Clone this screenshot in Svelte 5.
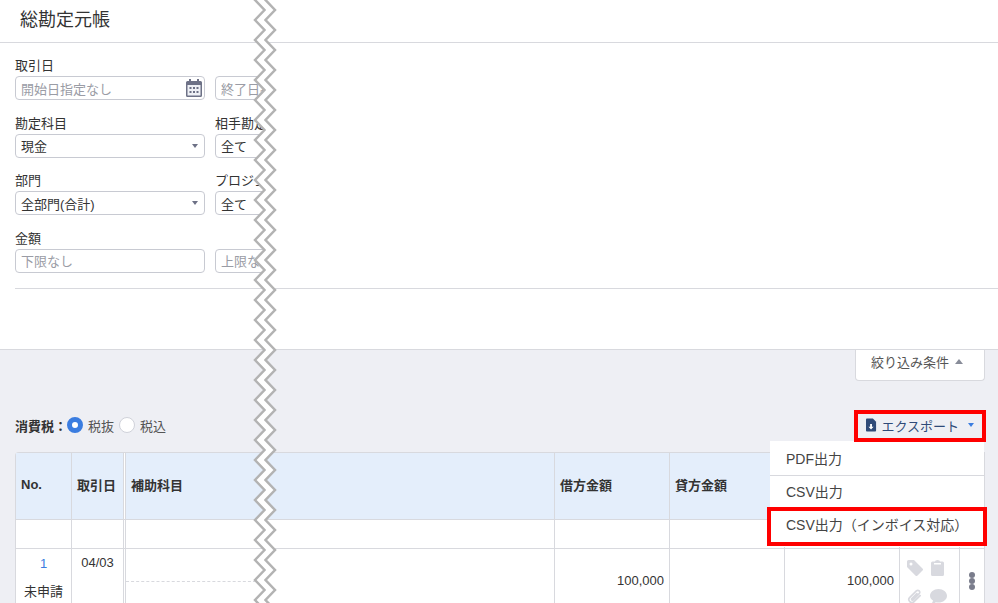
<script>
  // zigzag divider, one tooth every 20px
  let zigzag = (x0, x1) => {
    let pts = [];
    for (let i = -1; i < 32; i++) {
      pts.push(`${x0},${i * 20}`);
      pts.push(`${x1},${i * 20 + 10}`);
    }
    return pts;
  };
  let left = zigzag(255, 264.5);
  let right = zigzag(265.5, 275);
  let band = [...left, ...[...right].reverse()].join(' ');
</script>

<div class="page">
  <header class="title"><h1>総勘定元帳</h1></header>

  <section class="filters">
    <div class="row">
      <div class="field">
        <span class="lbl">取引日</span>
        <div class="box">
          <span class="ph">開始日指定なし</span>
          <svg class="cal" viewBox="0 0 16 18" width="16" height="18">
            <path fill="#6d7186" d="M3 0h2v2h6V0h2v2h1.500A1.500 1.500 0 0 1 16 3.500v13a1.500 1.500 0 0 1-1.500 1.500h-13A1.500 1.500 0 0 1 0 16.500v-13A1.500 1.500 0 0 1 1.500 2H3z"/>
            <rect x="1.500" y="6" width="13" height="10.500" fill="#eef0f5"/>
            <path fill="#6d7186" d="M3.500 8h2v2h-2zM7 8h2v2H7zM10.500 8h2v2h-2zM3.500 12h2v2h-2zM7 12h2v2H7zM10.500 12h2v2h-2z"/>
          </svg>
        </div>
      </div>
      <div class="field">
        <span class="lbl">&nbsp;</span>
        <div class="box"><span class="ph">終了日指定なし</span></div>
      </div>
    </div>
    <div class="row">
      <div class="field">
        <span class="lbl">勘定科目</span>
        <div class="box"><span>現金</span><i class="caret"></i></div>
      </div>
      <div class="field">
        <span class="lbl">相手勘定科目</span>
        <div class="box"><span>全て</span><i class="caret"></i></div>
      </div>
    </div>
    <div class="row">
      <div class="field">
        <span class="lbl">部門</span>
        <div class="box"><span>全部門(合計)</span><i class="caret"></i></div>
      </div>
      <div class="field">
        <span class="lbl">プロジェクト</span>
        <div class="box"><span>全て</span><i class="caret"></i></div>
      </div>
    </div>
    <div class="row">
      <div class="field">
        <span class="lbl">金額</span>
        <div class="box"><span class="ph">下限なし</span></div>
      </div>
      <div class="field">
        <span class="lbl">&nbsp;</span>
        <div class="box"><span class="ph">上限なし</span></div>
      </div>
    </div>
    <hr />
  </section>

  <section class="results">
    <div class="tab-row">
      <div class="tab">絞り込み条件<i class="up"></i></div>
    </div>

    <div class="tools">
      <div class="tax">
        <b>消費税：</b>
        <i class="radio on"></i><span>税抜</span>
        <i class="radio"></i><span>税込</span>
      </div>
      <div class="export">
        <svg viewBox="0 0 12 14" width="11" height="14">
          <path fill="#2f4a78" d="M1 0h6.500L11 3.500V13a1 1 0 0 1-1 1H1a1 1 0 0 1-1-1V1a1 1 0 0 1 1-1z"/>
          <path fill="#fff" d="M4.500 6h2v3h1.800L5.500 12 2.700 9h1.800z"/>
        </svg>
        <span>エクスポート</span>
        <i class="caret blue"></i>
      </div>
    </div>

    <table>
      <colgroup>
        <col class="w-no" /><col class="w-date" /><col class="w-sep" /><col class="w-sub" />
        <col class="w-amt" /><col class="w-amt" /><col class="w-amt" /><col class="w-icons" /><col class="w-more" />
      </colgroup>
      <thead>
        <tr>
          <th>No.</th><th>取引日</th><th class="sep"></th><th>補助科目</th>
          <th>借方金額</th><th>貸方金額</th><th></th><th></th><th></th>
        </tr>
      </thead>
      <tbody>
        <tr class="blank"><td></td><td></td><td class="sep"></td><td></td><td></td><td></td><td></td><td></td><td></td></tr>
        <tr class="entry">
          <td class="no"><span class="link">1</span><span class="st">未申請</span></td>
          <td class="date">04/03</td>
          <td class="sep"></td>
          <td class="sub"><div class="dash"></div></td>
          <td class="num">100,000</td>
          <td></td>
          <td class="num">100,000</td>
          <td class="icons">
            <div class="icon-grid">
              <svg viewBox="0 0 16 16" width="16" height="16"><path fill="#d8d9df" d="M0 1.500A1.500 1.500 0 0 1 1.500 0H7l8.500 8.500a1.500 1.500 0 0 1 0 2.100l-5 5a1.500 1.500 0 0 1-2.100 0L0 7zM4 2.500A1.500 1.500 0 1 0 4 5.500 1.500 1.500 0 0 0 4 2.500z"/></svg>
              <svg viewBox="0 0 13 16" width="13" height="16"><path fill="#d8d9df" d="M4 1.500a2.500 1.500 0 0 1 5 0h2.500A1.500 1.500 0 0 1 13 3v11.500a1.500 1.500 0 0 1-1.500 1.500h-10A1.500 1.500 0 0 1 0 14.500V3a1.500 1.500 0 0 1 1.500-1.500zM3 3v1.500h7V3z"/></svg>
              <svg viewBox="0 0 16 16" width="15" height="15"><path fill="none" stroke="#d8d9df" stroke-width="1.800" stroke-linecap="round" d="M14 7l-6.500 6.500a3 3 0 0 1-4.500-4.500L10 2a2 2 0 0 1 3 3L6.500 11.500a.8.800 0 0 1-1.300-1.300L10.500 5"/></svg>
              <svg class="bubble" viewBox="0 0 17 16" width="17" height="16"><path fill="#d8d9df" d="M8.500 0C13.200 0 17 3 17 6.800s-3.800 6.800-8.500 6.800c-1 0-2-.1-2.900-.4C5 14.200 3.300 15.200 1 15.200c1-1 1.800-2.200 2-3.600C1.200 10.400 0 8.700 0 6.800 0 3 3.800 0 8.500 0z"/></svg>
            </div>
          </td>
          <td class="more"><i></i><i></i><i></i></td>
        </tr>
      </tbody>
    </table>
  </section>

  <ul class="menu">
    <li class="first">PDF出力</li>
    <li>CSV出力</li>
    <li class="tall">CSV出力（インボイス対応）</li>
  </ul>

  <div class="mark mark-export"></div>
  <div class="mark mark-csv"></div>

  <svg class="tear" width="40" height="603" viewBox="245 0 40 603">
    <polygon points={band} fill="#fff" />
    <polyline points={left.join(' ')} fill="none" stroke="#b3b3b3" stroke-width="2.500" />
    <polyline points={right.join(' ')} fill="none" stroke="#b3b3b3" stroke-width="2.500" />
  </svg>
</div>

<style>
  :global(body) { margin: 0; overflow: hidden; }

  .page {
    position: relative;
    width: 998px;
    height: 603px;
    overflow: hidden;
    background: #fff;
    color: #333;
    font-family: "Liberation Sans", "Noto Sans CJK JP", sans-serif;
    font-size: 13px;
  }

  .title { height: 42px; border-bottom: 1px solid #d8d9de; padding-left: 20px; }
  .title h1 { margin: 0; font-size: 18px; line-height: 40px; font-weight: 400; }

  .filters { height: 306px; padding: 14px 0 0 15px; box-sizing: border-box; }
  .row { display: flex; gap: 10px; width: 250px; height: 57.500px; overflow: hidden; }
  .field { width: 190px; flex: none; }
  .lbl { display: block; line-height: 18px; height: 19px; white-space: nowrap; }
  .box {
    height: 24px;
    box-sizing: border-box;
    border: 1px solid #c8cad2;
    border-radius: 4px;
    display: flex;
    align-items: center;
    justify-content: space-between;
    padding: 0 5px;
    background: #fff;
  }
  .ph { color: #9a9ca5; }
  .cal { margin-right: -3px; }
  .caret {
    width: 0;
    height: 0;
    margin-right: 1px;
    border: 3px solid transparent;
    border-top: 4px solid #6d7186;
    border-bottom: 0;
  }
  hr { border: 0; border-top: 1px solid #d8d9de; margin: 1px 0 0; }

  .results {
    height: 254px;
    background: #eeeff4;
    border-top: 1px solid #d8d9de;
    padding: 0 13px 0 15px;
  }
  .tab-row { display: flex; justify-content: flex-end; }
  .tab {
    width: 130px;
    height: 31px;
    box-sizing: border-box;
    padding: 0 20px 7px 15px;
    background: #fff;
    border: 1px solid #d8d9de;
    border-top: 0;
    border-radius: 0 0 4px 4px;
    display: flex;
    align-items: center;
    gap: 6px;
    color: #555;
  }
  .up { width: 0; height: 0; border: 4px solid transparent; border-bottom: 5px solid #888c99; border-top: 0; }

  .tools {
    display: flex;
    justify-content: space-between;
    align-items: center;
    margin-top: 33px;
    height: 22px;
  }
  .tax { display: flex; align-items: center; color: #555; }
  .tax b { color: #333; }
  .tax span { margin: 0 5px; }
  .radio {
    width: 16px;
    height: 16px;
    box-sizing: border-box;
    border-radius: 50%;
    background: #fff;
    border: 1px solid #d0d2da;
  }
  .radio.on { border: 5px solid #3b7de0; }
  .export { display: flex; align-items: center; gap: 4px; padding-right: 11px; color: #2f4a78; }
  .caret.blue { border-top-color: #3b7de0; margin: 0 0 0 5px; }

  table {
    width: 969px;
    margin-top: 16px;
    table-layout: fixed;
    border-collapse: separate;
    border-spacing: 0;
    background: #fff;
    border-left: 1px solid #d8d9de;
    border-top: 1px solid #d8d9de;
    border-radius: 4px 0 0 0;
  }
  .w-no { width: 56px; }
  .w-date { width: 52px; }
  .w-sep { width: 2px; }
  .w-sub { width: 429px; }
  .w-amt { width: 115px; }
  .w-icons { width: 60px; }
  .w-more { width: 25px; }
  th, td { border-right: 1px solid #d8d9de; border-bottom: 1px solid #d8d9de; padding: 0 5px; }
  th { height: 67px; padding-bottom: 3px; box-sizing: border-box; background: #e4eefb; text-align: left; font-size: 13px; font-weight: 700; color: #333; white-space: nowrap; }
  .sep, th.sep { padding: 0; background: #fff; }
  .blank td { height: 28px; }
  .entry td { height: 54px; vertical-align: top; padding-top: 6px; }
  td.no, td.date { text-align: center; }
  td.no span { display: block; }
  .link { color: #3b7de0; line-height: 17px; }
  .st { margin-top: 9px; }
  td.sub { padding: 0; }
  .dash { width: 130px; margin-top: 32px; border-top: 1px dashed #d8d9de; }
  td.num { text-align: right; padding: 24px 5px 0 0; }
  td.icons { padding: 11px 0 0 7px; }
  .icon-grid { display: grid; grid-template-columns: 24px 24px; row-gap: 13px; }
  .bubble { margin-left: -1px; }
  td.more { padding: 23px 0 0; text-align: center; }
  td.more i { display: block; width: 6px; height: 6px; margin: 0 auto; border-radius: 50%; background: #7a7d8c; }

  .menu {
    position: absolute;
    left: 770px;
    top: 441px;
    width: 214px;
    margin: 0;
    padding: 0;
    list-style: none;
    background: #fff;
    color: #444;
    font-size: 14px;
  }
  .menu li { height: 33px; line-height: 33px; padding-left: 16px; border-bottom: 1px solid #d8d9de; box-sizing: border-box; }
  .menu li.first { height: 35px; line-height: 36px; }
  .menu li.tall { height: 38px; border: 0; }

  .mark { position: absolute; border: 4px solid #f00; box-sizing: border-box; }
  .mark-export { left: 854px; top: 410px; width: 132px; height: 32px; }
  .mark-csv { left: 767px; top: 507px; width: 220px; height: 39px; }

  .tear { position: absolute; left: 245px; top: 0; }
</style>
